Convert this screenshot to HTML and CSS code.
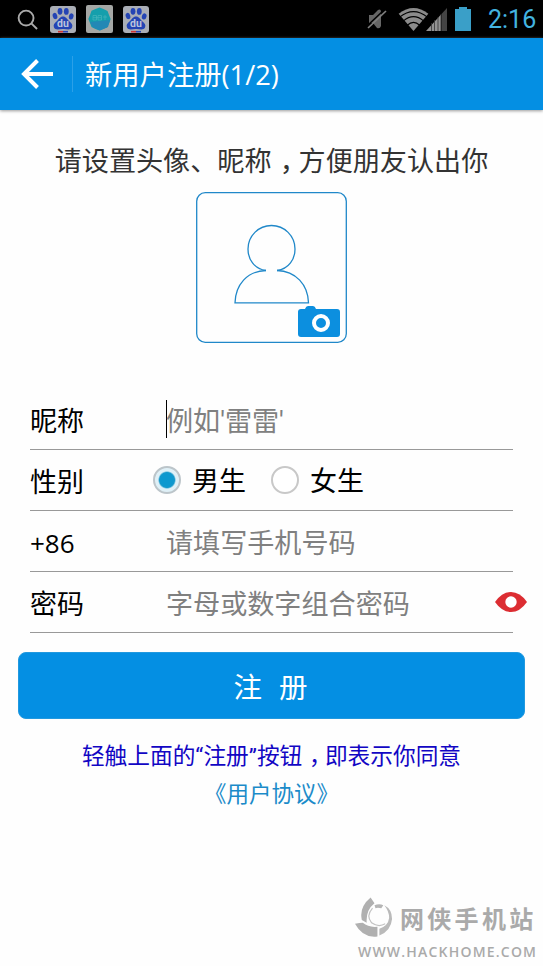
FILE: index.html
```html
<!DOCTYPE html>
<html lang="zh-CN">
<head>
<meta charset="utf-8">
<title>新用户注册</title>
<link rel="stylesheet" href="styles.css">
</head>
<body>
<header class="status">
  <svg class="search" viewBox="0 0 22 22"><circle cx="9.500" cy="9.500" r="7.800"/><path d="M15 15l6 6"/></svg>
  <svg class="app" viewBox="0 0 26 27">
    <rect width="26" height="27" rx="3" fill="#aaaeb6"/>
    <g id="paw" fill="#2444b4">
      <ellipse cx="10" cy="5.300" rx="2.400" ry="3.400"/>
      <ellipse cx="16.300" cy="5.400" rx="2.400" ry="3.400"/>
      <ellipse cx="5" cy="10" rx="2.300" ry="3.200" transform="rotate(-15 5 10)"/>
      <ellipse cx="21.200" cy="10.400" rx="2.300" ry="3.100" transform="rotate(15 21.200 10.400)"/>
      <path d="M13 10.500c3 0 4 2.500 6 4.500 3 2.500 4 4 3 6.500-1.500 3-5 1.500-9 1.500s-7.500 1.500-9-1.500c-1-2.500 0-4 3-6.500 2-2 3-4.500 6-4.500z"/>
      <path d="M8 25.700h5" stroke="#c33" stroke-width="1.600"/>
      <path d="M13 25.700h5" stroke="#2444b4" stroke-width="1.600"/>
    </g>
    <text x="13" y="21.300" class="paw-text">du</text>
  </svg>
  <svg class="app app-wide" viewBox="0 0 27 28">
    <rect width="27" height="28" rx="2" fill="#a5a7a5"/>
    <path d="M13.500 2.500l4 1.500 4 2 1.500 4 1.700 4-1.700 4.500-2 4-4 1.500-3.500 1.500-4-1.500-4-2-1.500-4L2.300 14 4 10l1.500-4.300 4-1.700z" fill="#159fac"/>
    <path d="M4 17l20-2-2 7-8 3.500-7-3z" fill="#2388b5"/>
    <path d="M7 10.500h3.500v4.500H7zM12 10.500h3.500v4.500H12zM17 12h4M19 10v5M7 12.700h8" fill="none" stroke="#48b6bb" stroke-width=".7"/>
  </svg>
  <svg class="app" viewBox="0 0 26 27">
    <rect width="26" height="27" rx="3" fill="#aaaeb6"/>
    <use href="#paw"/>
    <text x="13" y="21.300" class="paw-text">du</text>
  </svg>
  <span class="grow"></span>
  <svg class="mute" viewBox="0 0 20 22"><path d="M2 7h4l5-5q3-1.500 3 2v14q-1 3-4 2l-4-5H2z" fill="#666"/><path d="M0 18L17 2" stroke="#000" stroke-width="1.500"/><path d="M1 20L19 3" stroke="#808080" stroke-width="1.700"/></svg>
  <svg class="wifi" viewBox="0 0 31 24"><path d="M0 6Q15.500-6 31 6L15.500 24z" fill="#8b8b8b"/><path d="M1 9.500Q15.500-2 30 9.500M5 13.500Q15.500 4.500 26 13.500M9 18Q15.500 12 22 18" fill="none" stroke="#000" stroke-width="1.200"/></svg>
  <svg class="signal" viewBox="0 0 21 23"><path d="M0 23L15 6.500V23z" fill="#929292"/><path d="M15.500 6L21 0v23h-5.500z" fill="#444"/><path d="M5.500 15v8M8.500 12v11M12 9v14M15 6v17" stroke="#333" stroke-width=".8"/></svg>
  <svg class="battery" viewBox="0 0 16 24"><path d="M4 0h8v2h4v22H0V2h4z"/></svg>
  <span class="clock">2:16</span>
</header>

<nav class="titlebar">
  <svg class="back" viewBox="0 0 32 30"><path d="M16.500 1.500L3 15l13.500 13.500M3 15h29"/></svg>
  <h1 class="title">新用户注册<span class="latin">(1/2)</span></h1>
</nav>

<main class="page">
  <p class="prompt">请设置头像、昵称<span class="comma">，</span>方便朋友认出你</p>
  <svg class="avatar" viewBox="0 0 151 151">
    <rect x=".7" y=".7" width="149.600" height="149.600" rx="8.500"/>
    <path d="M70 78.500C58 77 52 67 52 57a23.500 23.500 0 0 1 47 0c0 10-6 20-18 21.500"/>
    <path d="M70 78.500C51 79 39.500 93 39 110.800h73.500C112 93 100 79 81 78.500"/>
    <g class="camera"><path d="M105 117h4q1-3 3-3h5q2 0 3 3h21q3 0 3 3v22q0 3-3 3h-36q-3 0-3-3v-22q0-3 3-3z"/><circle cx="125" cy="131" r="7"/></g>
  </svg>

  <form class="form">
    <div class="row"><label class="label">昵称</label><span class="field focused">例如'雷雷'</span></div>
    <div class="row">
      <label class="label">性别</label>
      <div class="options"><span class="radio checked"></span><span class="option">男生</span><span class="radio"></span><span class="option">女生</span></div>
    </div>
    <div class="row"><label class="label"><span class="latin">+86</span></label><span class="field">请填写手机号码</span></div>
    <div class="row"><label class="label">密码</label><span class="field">字母或数字组合密码</span>
      <svg class="eye" viewBox="0 0 32 20"><path d="M0 10Q7 0 16 0t16 10Q25 20 16 20T0 10z"/><circle cx="16" cy="10" r="5.700"/></svg>
    </div>
  </form>

  <button class="submit">注<span class="gap"></span>册</button>
  <p class="terms">轻触上面的“注册”按钮<span class="comma">，</span>即表示你同意</p>
  <a class="agreement">《用户协议》</a>
</main>

<footer class="watermark">
  <svg class="logo" viewBox="0 0 40 42">
    <path d="M16 1l4 6q-9 7-8 20L7 24Q4 11 16 1zM0 28q5-1 8-1 6 5 15 4v10Q8 43 0 28z" fill="#b0b0b0"/>
    <path d="M20 9q5-2 9 0l-2 3q-4-1-6 0z" fill="#b5b5b5"/>
    <path d="M30 9q8 4 8 14-1 12-13 17v-7q9-3 10-11 0-7-5-13z" fill="#bababa"/>
    <path d="M18 12q-7 8-1 15 7 5 14 1" fill="none" stroke="#c2c2c2" stroke-width="1.200"/>
  </svg>
  <div class="brand">网侠手机站</div>
  <div class="url">WWW.HACKHOME.COM</div>
</footer>
</body>
</html>
```
FILE: styles.css
```css
* { box-sizing: border-box; }
body {
  margin: 0;
  height: 966px;
  display: flex;
  flex-direction: column;
  background: #fefefe;
  color: #000;
  font-family: Roboto, "Noto Sans CJK SC", sans-serif;
  font-size: 27px;
  overflow: hidden;
}
p, h1 { margin: 0; font-weight: 400; }
svg { display: block; flex: none; }
.comma { padding: 0 .2em 0 .3em; font-feature-settings: "halt"; line-height: 1; }
.latin { font-family: "Open Sans", sans-serif; line-height: 1; }

.status {
  height: 38px;
  flex: none;
  display: flex;
  align-items: center;
  padding: 0 9px 0 17px;
  background: #000;
}
.search { width: 21px; height: 21px; margin-right: 12px; fill: none; stroke: #aaa; stroke-width: 2; }
.app { width: 26px; height: 27px; margin-right: 10px; }
.app-wide { width: 27px; height: 28px; }
.paw-text { font: 700 10.500px Roboto, sans-serif; fill: #bcc4dc; text-anchor: middle; }
.grow { flex: 1; }
.mute { width: 20px; height: 22px; margin-right: 11px; }
.wifi { width: 31px; height: 23px; }
.signal { width: 21px; height: 23px; margin-right: 8px; margin-left: -3px; }
.battery { width: 16px; height: 24px; margin-right: 17px; fill: #3a9fc8; }
.clock { color: #43b4e0; font-size: 25px; line-height: 38px; width: 46px; margin-top: 2px; white-space: nowrap; }

.titlebar {
  height: 72px;
  flex: none;
  display: flex;
  align-items: center;
  padding-left: 21px;
  background: #048fe3;
  box-shadow: 0 1px 3px #999;
}
.back { width: 32px; height: 30px; fill: none; stroke: #fff; stroke-width: 4; }
.title {
  height: 36px;
  margin-left: 19px;
  padding-left: 12px;
  border-left: 1px solid #2ba0e8;
  color: #fff;
  font-size: 27.300px;
  line-height: 40px;
  white-space: nowrap;
}

.page { display: flex; flex-direction: column; align-items: center; }
.prompt { margin-top: 29px; height: 40px; font-size: 27.100px; line-height: 46px; color: #333; white-space: nowrap; }
.avatar { width: 151px; height: 151px; margin-top: 13px; fill: none; stroke: #2088c9; stroke-width: 1.300; }
.camera { fill: #0c8fdf; stroke: none; }
.camera circle { stroke: #fff; stroke-width: 4; }

.form { width: 483px; margin-top: 46px; }
.row {
  height: 61px;
  display: flex;
  align-items: center;
  border-bottom: 1px solid #999;
}
.label { width: 136px; height: 38px; line-height: 44px; flex: none; }
.label .latin { font-size: 26px; }
.field { height: 38px; line-height: 44px; color: #808080; font-size: 27.100px; white-space: nowrap; border-left: 1px solid transparent; text-indent: -1px; }
.focused { border-left-color: #000; }
.options { display: flex; align-items: center; height: 38px; line-height: 38px; margin-left: -13px; }
.radio { width: 28px; height: 28px; margin-right: 11px; border: 2px solid #c8c8c8; border-radius: 50%; background: #fff; }
.checked { border-color: #bcc5ca; background: radial-gradient(circle, #0c98cf 0 6px, #1498cb 7.500px, #dff0f7 9px); }
.option { height: 38px; line-height: 43px; margin-right: 25px; }
.eye { width: 32px; height: 20px; margin-left: auto; margin-right: -14px; fill: #dc2d32; }
.eye circle { fill: #fff; }

.submit {
  width: 507px;
  height: 67px;
  margin: 19px 0 0 -1px;
  padding: 0 1px 0 0;
  border: 1px solid #2299df;
  border-radius: 8px;
  background: #048fe3;
  color: #fff;
  font: 28.500px Roboto, "Noto Sans CJK SC", sans-serif;
}
.gap { display: inline-block; width: 17px; }
.terms { margin-top: 18px; height: 34px; font-size: 22.700px; line-height: 39px; color: #1206c4; white-space: nowrap; }
.agreement { height: 34px; margin-top: 4px; font-size: 22.500px; line-height: 38px; color: #1b8bc9; }

.watermark {
  width: 186px;
  margin: auto 0 3px 355px;
  display: grid;
  grid-template-columns: 39px 1fr;
  column-gap: 6px;
  align-items: center;
}
.logo { width: 39px; height: 42px; margin-top: -6px; }
.brand { color: #aaa; font-size: 24px; font-weight: 700; letter-spacing: 3.300px; line-height: 42px; white-space: nowrap; }
.url {
  grid-column: 1 / 3;
  padding-left: 3px;
  color: #aaa;
  font-family: "Open Sans", sans-serif;
  font-size: 14px;
  font-weight: 600;
  letter-spacing: 1.200px;
  line-height: 22px;
  white-space: nowrap;
}
```
